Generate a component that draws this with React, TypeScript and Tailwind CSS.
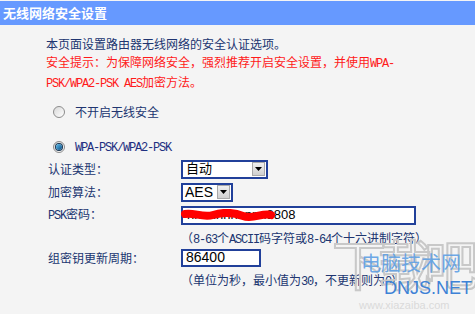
import type { ReactNode } from "react";

// ascii runs in the original are a bitmap half-width font, ~6px per char
const M = ({ children }: { children: ReactNode }) => (
  <span className="font-['Liberation_Mono',monospace] text-[12px] tracking-[-1.2px]">{children}</span>
);

function Radio({ checked }: { checked?: boolean }) {
  return (
    <span className="flex h-[12px] w-[12px] items-center justify-center rounded-full border border-[#8c8c8c] bg-gradient-to-br from-[#d8d8d8] to-[#ffffff]">
      {checked && (
        <span className="h-[6px] w-[6px] rounded-full bg-gradient-to-br from-[#5fc0ee] to-[#0a4f86] ring-1 ring-[#1a3550]" />
      )}
    </span>
  );
}

function Arrow() {
  return (
    <span className="flex h-[14px] w-[13px] items-center justify-center border border-[#a8a8a8] bg-gradient-to-b from-[#f0f0f0] to-[#cfcfcf]">
      <svg width="7" height="4" viewBox="0 0 7 4">
        <path d="M0 0h7L3.5 4z" fill="#000" />
      </svg>
    </span>
  );
}

export default function App() {
  return (
    <div className="relative h-[314px] w-[475px] overflow-hidden bg-[#f4f4f4] font-['Noto_Sans_CJK_SC',sans-serif] text-[12px] text-[#203570]">
      {/* title bar */}
      <div className="mt-px flex h-6 items-center bg-[#6699ff] pl-[3px] text-[13px] font-bold text-white">
        无线网络安全设置
      </div>

      {/* intro */}
      <div className="pl-[46px] pt-[10px] leading-[17.5px]">
        <p>本页面设置路由器无线网络的安全认证选项。</p>
        <p className="text-[#ff1a1a]">
          安全提示：为保障网络安全，强烈推荐开启安全设置，并使用<M>WPA-</M>
          <br />
          <M>PSK/WPA2-PSK AES</M>加密方法。
        </p>
      </div>

      {/* radios */}
      <div className="mt-[9px] flex h-[18px] items-center gap-[10px] pl-[53px]">
        <Radio />
        <span>不开启无线安全</span>
      </div>
      <div className="mt-[17px] flex h-[18px] items-center gap-[10px] pl-[53px]">
        <Radio checked />
        <span className="text-[#1d2f80]">
          <M>WPA-PSK/WPA2-PSK</M>
        </span>
      </div>

      {/* form */}
      <div className="mt-[4px] pl-[48px]">
        <div className="flex h-[19px] items-center">
          <span className="w-[133px]">认证类型：</span>
          <div className="flex h-[19px] w-[87px] items-center justify-between border-2 border-[#21409a] bg-white pl-[3px] pr-px font-['Liberation_Sans','Noto_Sans_CJK_SC',sans-serif] text-[13px] text-black">
            <span>自动</span>
            <Arrow />
          </div>
        </div>
        <div className="mt-[4px] flex h-[19px] items-center">
          <span className="w-[133px]">加密算法：</span>
          <div className="flex h-[19px] w-[52px] items-center justify-between border-2 border-[#21409a] bg-white pl-[2px] pr-px font-['Liberation_Sans',sans-serif] text-[14px] text-black">
            <span>AES</span>
            <Arrow />
          </div>
        </div>
        <div className="mt-[4px] flex h-[19px] items-center">
          <span className="w-[133px]">
            <M>PSK</M>密码：
          </span>
          <div className="relative flex h-[19px] w-[235px] items-center border-2 border-[#21409a] bg-white pl-[4px] font-['Liberation_Sans',sans-serif] text-[13px] text-black">
            <span>nnnnnnnnnnn8808</span>
            <svg className="absolute left-[-2px] top-[1px]" width="96" height="14" viewBox="0 0 96 14">
              <path
                d="M4 5 C 12 3, 22 9, 32 6 S 52 3, 62 7 S 82 3, 90 6"
                stroke="#ff0000"
                strokeWidth="8"
                strokeLinecap="round"
                fill="none"
              />
            </svg>
          </div>
        </div>
        <p className="mt-[4px] pl-[133px] leading-[17px]">
          （<M>8-63</M>个<M>ASCII</M>码字符或<M>8-64</M>个十六进制字符）
        </p>
        <div className="mt-0 flex h-[18px] items-center">
          <span className="w-[133px]">组密钥更新周期：</span>
          <div className="flex h-[18px] w-[80px] items-center border-2 border-[#21409a] bg-white pl-[3px] font-['Liberation_Sans',sans-serif] text-[14px] text-black">
            86400
          </div>
        </div>
        <p className="mt-[4px] pl-[133px] leading-[17px]">
          （单位为秒，最小值为<M>30</M>，不更新则为<M>0</M>）
        </p>
      </div>

      {/* watermark */}
      <div className="pointer-events-none absolute left-[332px] top-[236px] font-['Noto_Sans_CJK_SC',sans-serif] text-[54px] leading-none tracking-[-8px] text-transparent [-webkit-text-stroke:2px_#c8c8c8]">
        下载吧
      </div>
      <div className="pointer-events-none absolute left-[361px] top-[250px] font-['Noto_Sans_CJK_SC',sans-serif] text-[20px] leading-[26px] text-[#5b9ee4]/90">
        电脑技术网
      </div>
      <div className="pointer-events-none absolute left-[384px] top-[277px] font-['Liberation_Sans',sans-serif] text-[18px] leading-[22px] text-[#3d82d6]">
        DNJS.NET
      </div>
      <div className="pointer-events-none absolute left-[359px] top-[298px] font-['Liberation_Sans',sans-serif] text-[11px] leading-[14px] text-[#dadada]">
        www.xiazaiba.com
      </div>
    </div>
  );
}
